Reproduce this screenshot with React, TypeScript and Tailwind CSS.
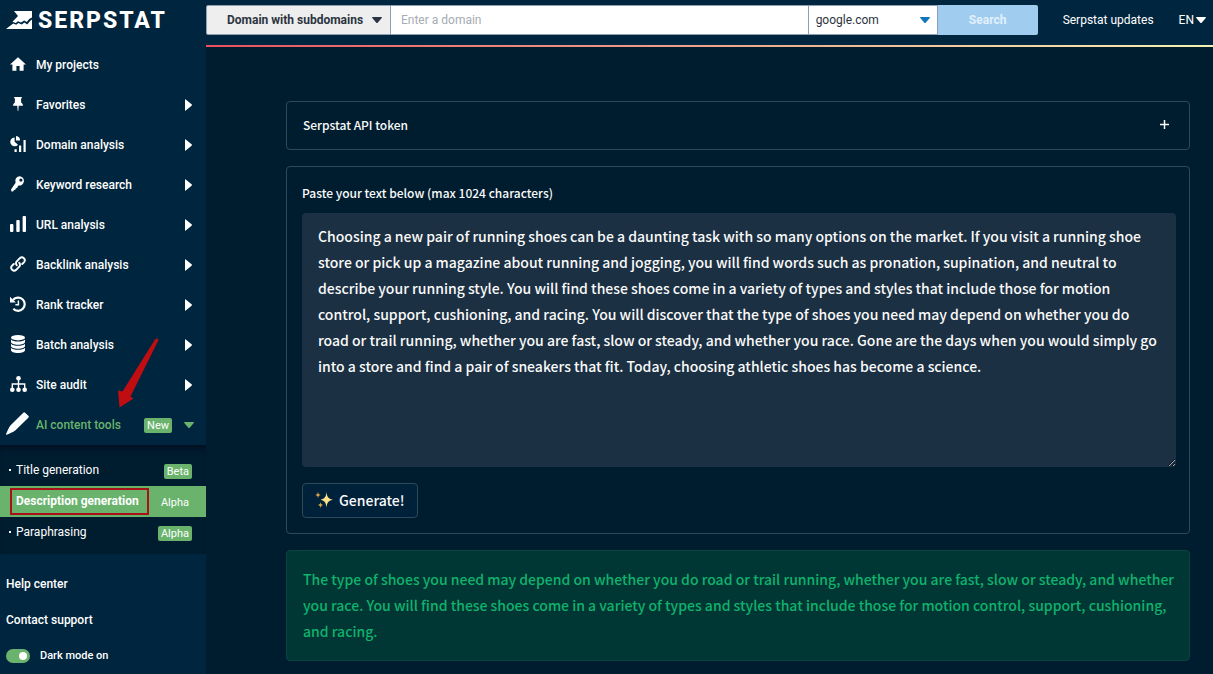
import React, { useState } from "react";

type IconProps = { className?: string };

const HomeIcon = () => (
  <svg viewBox="2 3 20 17" className="h-[14px] w-4" fill="currentColor" aria-hidden="true">
    <path d="M10 20v-6h4v6h5v-8h3L12 3 2 12h3v8z" />
  </svg>
);

const PinIcon = () => (
  <svg viewBox="0 0 10 14" className="h-[14px] w-[10px]" fill="currentColor" aria-hidden="true">
    <path d="M1.2 0h7.6v1.6h-.9l.4 4.2C9.300 6.500 10 7.400 10 8.800H5.700L5.300 14h-.6l-.4-5.200H0c0-1.400.7-2.300 1.700-3l.4-4.200h-.9z" />
  </svg>
);

const DomainIcon = () => (
  <svg viewBox="0 0 16 16" className="h-4 w-4" fill="currentColor" aria-hidden="true">
    <path d="M4.600 1.400V5.800l3.400 2.900A4.400 4.400 0 1 1 4.600 1.400z" />
    <path d="M6 0a4.400 4.400 0 0 1 4 4.400H6z" />
    <path d="M4.500 13.200h2.200V16H4.500zM9 9.500h2.200V16H9zM13.500 4h2.200v12h-2.200z" />
  </svg>
);

const KeyIcon = () => (
  <svg viewBox="0 0 14 16" className="h-4 w-[14px]" fill="currentColor" aria-hidden="true">
    <path
      fillRule="evenodd"
      d="M9 .2a4.700 4.700 0 1 1-1.500 9.300L6.600 10.700l-.5 1.300-1.300.3-.4 1.500-1.400.2-.9 1.500-1.600.1L0 13.400l4.600-6.600A4.700 4.700 0 0 1 9 .2zm.9 2.300a1.600 1.600 0 1 0 0 3.200 1.600 1.600 0 0 0 0-3.200z"
    />
  </svg>
);

const BarsIcon = () => (
  <svg viewBox="0 0 16 16" className="h-4 w-4" fill="currentColor" aria-hidden="true">
    <rect x="0" y="8" width="3.400" height="8" rx="1" />
    <rect x="6.300" y="4" width="3.400" height="12" rx="1" />
    <rect x="12.600" y="0" width="3.400" height="16" rx="1" />
  </svg>
);

const LinkIcon = () => (
  <svg viewBox="0 0 16 16" className="h-4 w-4" fill="none" stroke="currentColor" strokeWidth="1.900" strokeLinecap="round" aria-hidden="true">
    <path d="M6.800 9.200a2.700 2.700 0 0 1 0-3.900l3-3.100a2.900 2.900 0 0 1 4.100 4.100l-1.700 1.700" />
    <path d="M9.200 6.800a2.700 2.700 0 0 1 0 3.900l-3 3.100a2.900 2.900 0 0 1-4.100-4.100L3.800 8" />
  </svg>
);

const HistoryIcon = () => (
  <svg viewBox="0 0 16 16" className="h-4 w-4" fill="none" stroke="currentColor" aria-hidden="true">
    <path d="M3 4A6.600 6.600 0 1 1 3.300 12.700" strokeWidth="2.200" />
    <path d="M0 .8v5.700h5.800z" fill="currentColor" stroke="none" />
    <path d="M8.400 4.600v4.100H5.400" strokeWidth="1.500" />
  </svg>
);

const DatabaseIcon = () => (
  <svg viewBox="0 0 14 18" className="h-[18px] w-[14px]" fill="currentColor" aria-hidden="true">
    <ellipse cx="7" cy="2.700" rx="7" ry="2.700" />
    <path d="M0 4.500c1 1.500 4 2.100 7 2.100s6-.6 7-2.100v2.600c0 1.500-3 2.700-7 2.700S0 8.600 0 7.100z" />
    <path d="M0 8.700c1 1.500 4 2.100 7 2.100s6-.6 7-2.100v2.400c0 1.500-3 2.700-7 2.700s-7-1.200-7-2.700z" />
    <path d="M0 12.700c1 1.500 4 2.100 7 2.100s6-.6 7-2.100v2.500C14 16.800 11 18 7 18s-7-1.200-7-2.800z" />
  </svg>
);

const SitemapIcon = () => (
  <svg viewBox="0 0 17 16" className="h-4 w-[17px]" fill="currentColor" aria-hidden="true">
    <circle cx="8.500" cy="2.300" r="2.300" />
    <circle cx="2.300" cy="13.700" r="2.300" />
    <circle cx="8.500" cy="13.700" r="2.300" />
    <circle cx="14.700" cy="13.700" r="2.300" />
    <path d="M8.500 3v10M2.300 13V8h12.400v5" fill="none" stroke="currentColor" strokeWidth="1.400" />
  </svg>
);

const PencilIcon = () => (
  <svg viewBox="0 0 23 23" className="h-[23px] w-[23px]" fill="currentColor" aria-hidden="true">
    <path d="M17.300.7a1.400 1.400 0 0 1 1.800 0l3.200 3a1.400 1.400 0 0 1 0 2L9.500 18.300c-1.300 1.200-5.600 3.300-8.800 4.400-.5.200-.8-.2-.6-.7C1.200 18.900 3.200 14.700 4.400 13.400z" />
  </svg>
);

const CaretRight = () => (
  <svg viewBox="0 0 7 12" className="h-3 w-[7px]" fill="currentColor" aria-hidden="true">
    <path d="M0 .6Q0-.2.7.4L6.600 5.300Q7.200 6 6.600 6.700L.7 11.600Q0 12.200 0 11.400z" />
  </svg>
);

const CaretDown = ({ className = "" }: IconProps) => (
  <svg viewBox="0 0 10 6" className={className} fill="currentColor" aria-hidden="true">
    <path d="M.6 0h8.800q.9.100.3.900L5.700 5.700q-.7.600-1.400 0L.3.900Q-.3.100.6 0z" />
  </svg>
);

const Sparkles = () => (
  <svg viewBox="0 0 18 18" className="h-[18px] w-[18px]" aria-hidden="true">
    <path fill="#fde08a" d="M11.500 1c.6 5 1.500 6.600 6.300 7.800-4.800 1.200-5.700 2.800-6.300 7.800-.6-5-1.500-6.600-6-7.800 4.500-1.200 5.400-2.800 6-7.800z" />
    <path fill="#d9a648" d="M3 .8c.3 2 .7 2.700 2.700 3.200-2 .5-2.400 1.200-2.700 3.300C2.700 5.200 2.300 4.500.3 4 2.300 3.500 2.700 2.800 3 .8zM5.500 11c.3 1.900.7 2.500 2.600 3-1.900.5-2.300 1.200-2.600 3.200-.3-2-.7-2.700-2.500-3.200 1.800-.5 2.200-1.100 2.500-3z" />
  </svg>
);

const Logo = () => (
  <a href="#" className="flex h-[45px] items-center gap-1.5 pb-[5px] pl-1.5 text-white" aria-label="Serpstat">
    <svg viewBox="0 0 26 18" className="h-[18px] w-[26px] shrink-0" fill="currentColor" aria-hidden="true">
      <path d="M8 0h18v6.500l-2.800 1.600-2.400 3-2.600-1.700-3.200 2.100-3-1.300-2.200 1.700-3.300-1.200 5.500-5.600z" />
      <path d="M0 18l7.200-5.600 3 1.400 2.200-1.700 3.300 1.500 2.700-2 2.800 1.900 2.900-3.500L26 8.500V18z" />
    </svg>
    <span className="pt-0.5 font-[Roboto,sans-serif] text-[23px] leading-6 font-extrabold tracking-[2px]">SERPSTAT</span>
  </a>
);

const menu = [
  { label: "My projects", Icon: HomeIcon, arrow: false },
  { label: "Favorites", Icon: PinIcon, arrow: true },
  { label: "Domain analysis", Icon: DomainIcon, arrow: true },
  { label: "Keyword research", Icon: KeyIcon, arrow: true },
  { label: "URL analysis", Icon: BarsIcon, arrow: true },
  { label: "Backlink analysis", Icon: LinkIcon, arrow: true },
  { label: "Rank tracker", Icon: HistoryIcon, arrow: true },
  { label: "Batch analysis", Icon: DatabaseIcon, arrow: true },
  { label: "Site audit", Icon: SitemapIcon, arrow: true },
];

const tools = [
  { label: "Title generation", badge: "Beta", active: false },
  { label: "Description generation", badge: "Alpha", active: true },
  { label: "Paraphrasing", badge: "Alpha", active: false },
];

const Badge = ({ children }: { children: React.ReactNode }) => (
  <span className="rounded-xs bg-[#69b36c] px-[3px] text-[11px] leading-[15px] font-normal text-white">{children}</span>
);

function Sidebar() {
  const [dark, setDark] = useState(true);
  return (
    <aside className="w-[206px] shrink-0 bg-[#00253e] text-xs font-medium text-white">
      <Logo />
      <nav className="relative">
        {menu.map(({ label, Icon, arrow }) => (
          <a key={label} href="#" className="flex h-10 items-center pr-3.5">
            <span className="flex w-9 justify-center pb-0.5">
              <Icon />
            </span>
            <span className="flex-1">{label}</span>
            {arrow && <CaretRight />}
          </a>
        ))}
        <button type="button" className="flex h-10 w-full items-center pr-3 text-left text-[#69b36c]">
          <span className="flex w-9 pb-1 pl-1.5 text-white">
            <PencilIcon />
          </span>
          <span className="flex-1">AI content tools</span>
          <Badge>New</Badge>
          <CaretDown className="ml-3 h-[6px] w-[10px]" />
        </button>
        <svg viewBox="0 0 42 70" className="pointer-events-none absolute top-[293px] left-[117px] h-[70px] w-[42px]" fill="#c00d12" aria-hidden="true">
          <path d="M38 1.500Q40.500-.5 41.500 2L13.500 58.500l3 2L2.500 69.500 1 52.500l4.500 1z" />
        </svg>
        <ul className="bg-[#001c2f] pt-2.5 pb-1.5 shadow-[inset_0_6px_6px_-4px_#000c1c]">
          {tools.map(({ label, badge, active }) => (
            <li key={label}>
              <a
                href="#"
                className={
                  active
                    ? "relative flex h-[31px] items-center justify-between bg-[#69b36c] pr-3.5 pl-4 font-bold"
                    : "flex h-[31px] items-center justify-between pr-3.5 pl-[9px] font-normal"
                }
              >
                {active ? (
                  <span className="pb-0.5">{label}</span>
                ) : (
                  <span className="flex items-center gap-[5px] pb-0.5">
                    <span className="h-0.5 w-0.5 bg-white" />
                    {label}
                  </span>
                )}
                <span className="flex pt-0.5">
                  <Badge>{badge}</Badge>
                </span>
                {active && <span className="absolute top-0.5 left-2.5 h-[27px] w-[139px] border-2 border-[#a81117]" />}
              </a>
            </li>
          ))}
        </ul>
      </nav>
      <div className="pt-3 pl-1.5">
        <a href="#" className="flex h-9 items-center">Help center</a>
        <a href="#" className="flex h-9 items-center">Contact support</a>
        <label className="flex h-9 items-center gap-2.5 text-[11px]">
          <input
            type="checkbox"
            checked={dark}
            onChange={(e) => setDark(e.target.checked)}
            className="flex h-3.5 w-6 appearance-none items-center rounded-full bg-[#8493a0] px-[3px] before:h-2 before:w-2 before:rounded-full before:bg-white checked:justify-end checked:bg-[#69b36c]"
          />
          Dark mode on
        </label>
      </div>
    </aside>
  );
}

function Header() {
  return (
    <header>
      <div className="flex h-[45px] items-center bg-[#00253e] pr-[7px] pb-[5px] text-xs text-white">
        <form className="flex h-[30px] flex-1" onSubmit={(e) => e.preventDefault()}>
          <button type="button" className="flex w-[185px] items-center justify-between rounded-l-xs border border-[#8d9fb0] bg-[#eeeeee] pr-2 pl-5 font-bold text-[#2b3440]">
            Domain with subdomains
            <CaretDown className="h-[6px] w-[10px]" />
          </button>
          <input
            type="text"
            aria-label="Domain"
            placeholder="Enter a domain"
            className="min-w-0 flex-1 border-y border-[#8d9fb0] bg-white px-2.5 text-[#2b3440] placeholder:text-[#a5acb3]"
          />
          <div className="relative flex w-[130px] text-[#0f75bc]">
            <select aria-label="Search engine" className="w-full appearance-none border border-[#8d9fb0] bg-white pl-[7px] text-[#2b3440]">
              <option>google.com</option>
            </select>
            <CaretDown className="pointer-events-none absolute top-3 right-2 h-[6px] w-[10px]" />
          </div>
          <button type="submit" className="w-[100px] rounded-r-xs bg-[#9fccef] font-bold text-[#e2f0fb]">Search</button>
        </form>
        <a href="#" className="ml-[25px]">Serpstat updates</a>
        <button type="button" className="ml-[25px] flex items-center gap-0.5">
          EN
          <CaretDown className="h-[6px] w-[10px]" />
        </button>
      </div>
      <div className="h-0.5 bg-linear-to-r from-[#e8505f] via-[#eda58c] to-[#f5f2b0]" />
    </header>
  );
}

const sample =
  "Choosing a new pair of running shoes can be a daunting task with so many options on the market. If you visit a running shoe store or pick up a magazine about running and jogging, you will find words such as pronation, supination, and neutral to describe your running style. You will find these shoes come in a variety of types and styles that include those for motion control, support, cushioning, and racing. You will discover that the type of shoes you need may depend on whether you do road or trail running, whether you are fast, slow or steady, and whether you race. Gone are the days when you would simply go into a store and find a pair of sneakers that fit. Today, choosing athletic shoes has become a science.";

export default function App() {
  const [text, setText] = useState(sample);
  return (
    <div className="flex min-h-screen bg-[#001d2f] font-[Roboto,sans-serif]">
      <Sidebar />
      <div className="min-w-0 flex-1">
        <Header />
        <main className="flex flex-col gap-4 pt-[54px] pr-[23px] pl-20 font-['Noto_Sans_CJK_SC',sans-serif] font-medium text-[#fafafa]">
          <button type="button" className="flex h-[49px] items-center justify-between rounded-sm border border-[#2d4a5c] px-4 pb-0.5 text-xs">
            Serpstat API token
            <svg viewBox="0 0 9 9" className="mr-1 h-[9px] w-[9px]" stroke="currentColor" strokeWidth="1.500" aria-hidden="true">
              <path d="M4.500 0v9M0 4.500h9" />
            </svg>
          </button>
          <form className="rounded-sm border border-[#2d4a5c] pt-[15px] pr-[13px] pb-[15px] pl-[15px]" onSubmit={(e) => e.preventDefault()}>
            <label htmlFor="source" className="mb-[9px] block text-xs leading-[22px]">
              Paste your text below (max 1024 characters)
            </label>
            <textarea
              id="source"
              value={text}
              onChange={(e) => setText(e.target.value)}
              className="block h-[254px] w-full resize rounded-sm bg-[#1b3042] px-4 py-2.5 text-sm leading-[26px]"
            />
            <button type="submit" className="mt-4 flex h-[35px] items-center gap-1.5 rounded-sm border border-[#2d4a5c] bg-[#00213a] px-3 pb-0.5 text-sm">
              <Sparkles />
              Generate!
            </button>
          </form>
          <div className="rounded-sm border border-[#0a4442] bg-[#003634] pt-[15px] pr-3 pb-4 pl-4 text-sm leading-[26px] text-[#10b26c]">
            The type of shoes you need may depend on whether you do road or trail running, whether you are fast, slow or steady, and whether you race. You will find these shoes come in a variety of types and styles that include those for motion control, support, cushioning, and racing.
          </div>
        </main>
      </div>
    </div>
  );
}
